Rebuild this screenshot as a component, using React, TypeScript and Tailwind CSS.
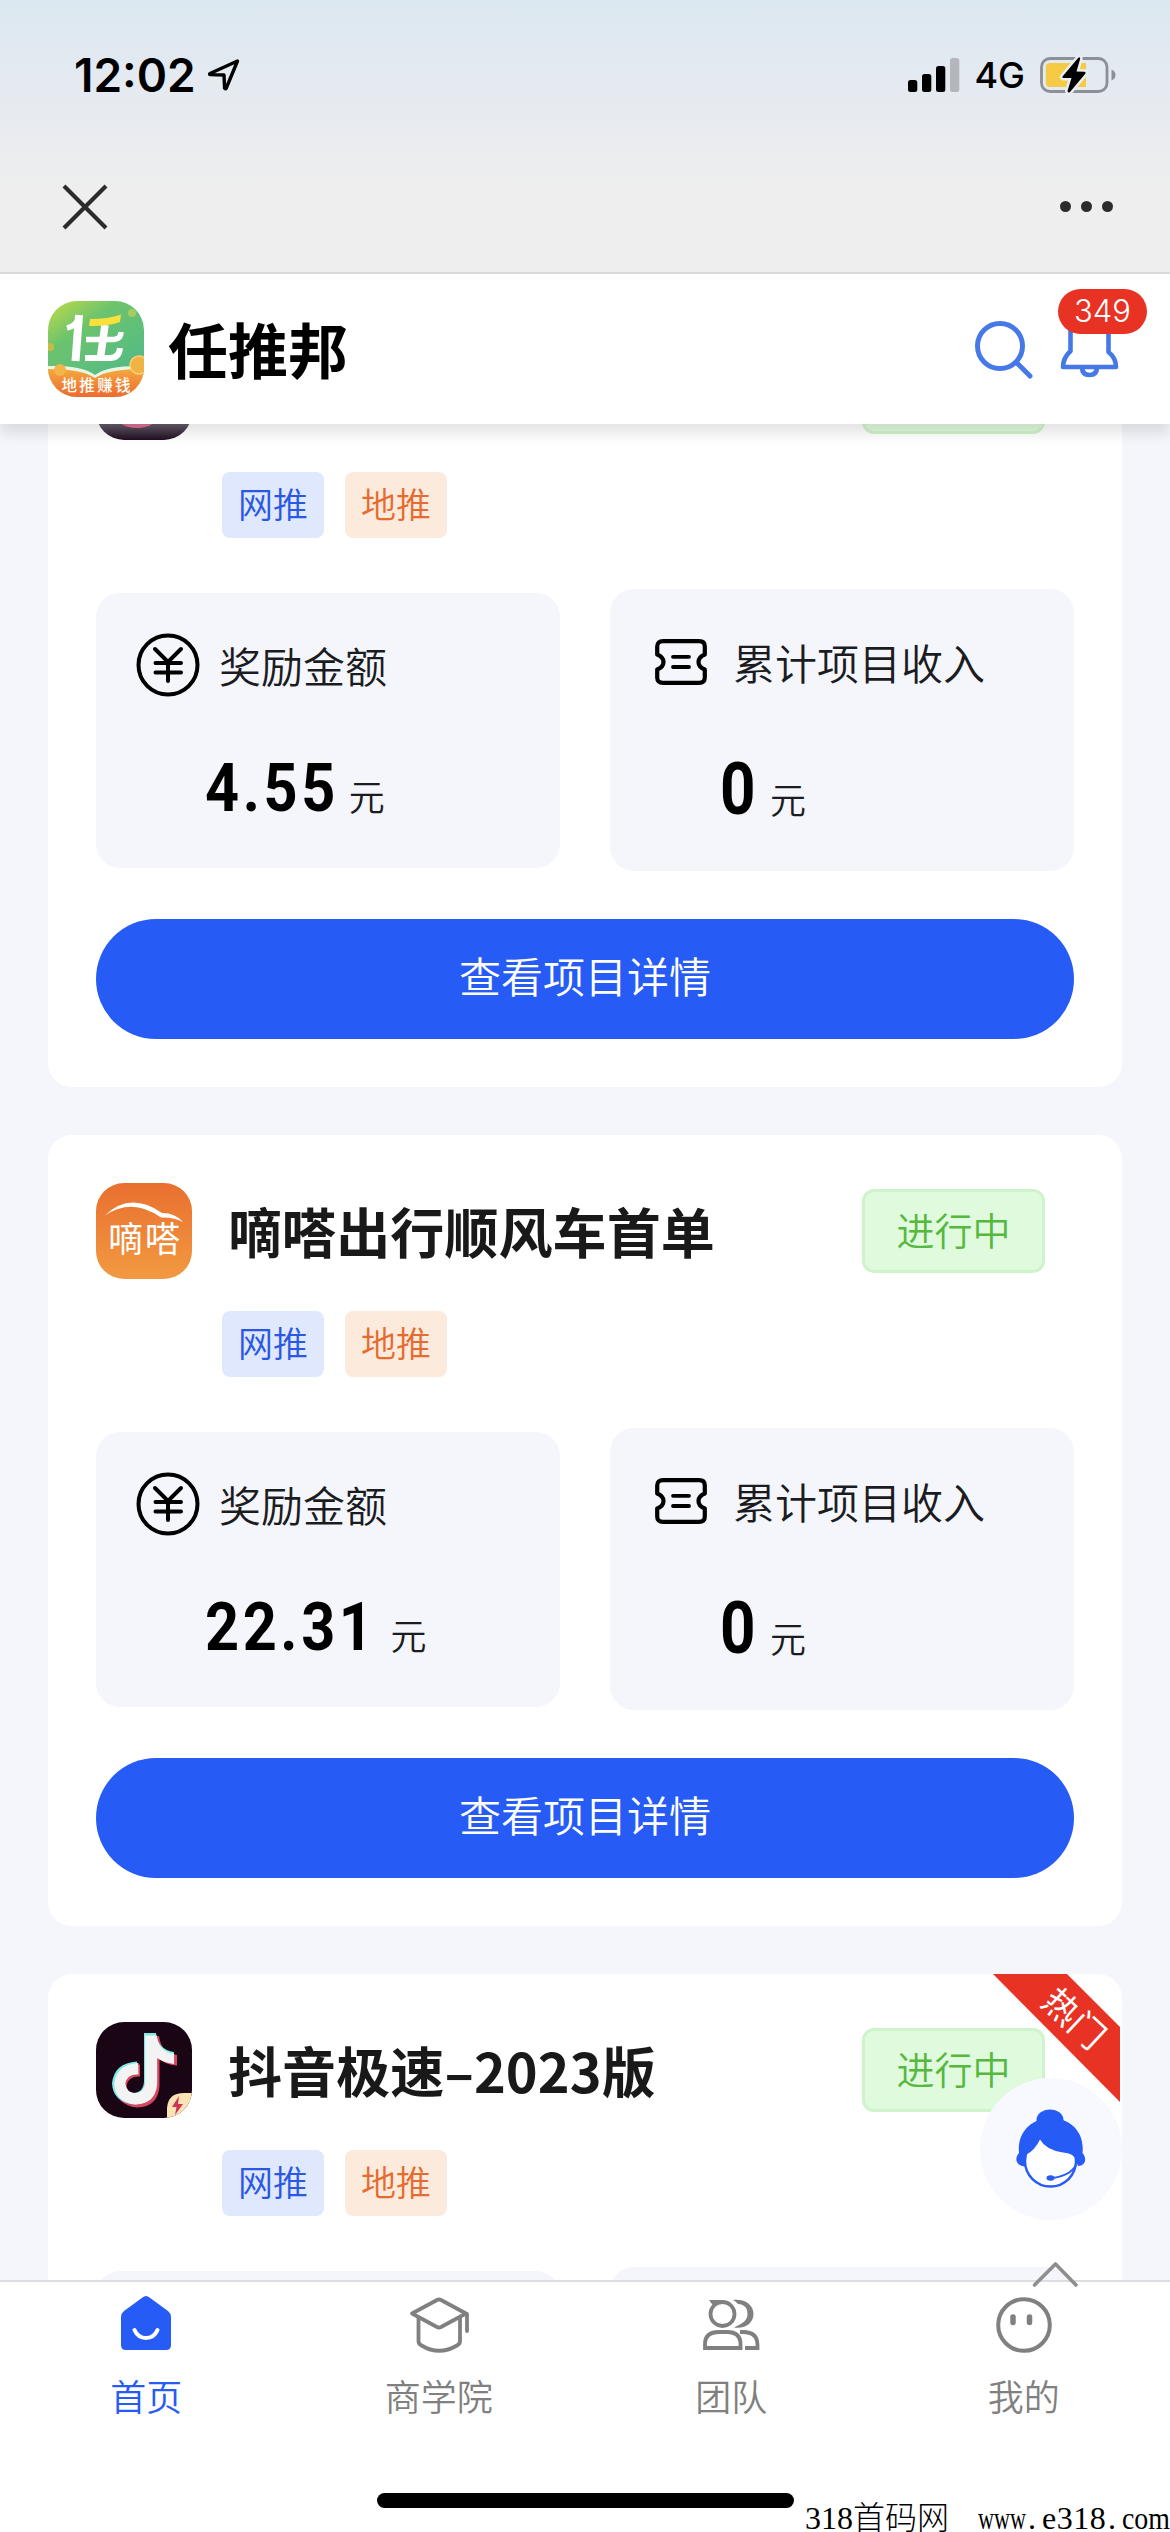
import React from 'react';

interface Project {
  id: number;
  name?: string;
  status?: string;
  icon: React.ReactNode;
  reward?: string;
  income?: string;
  hot?: boolean;
}

/* ---------- status bar icons ---------- */

function LocationArrow() {
  return (
    <svg width="34" height="34" viewBox="0 0 34 34" fill="none" stroke="#000" strokeWidth="3.4" strokeLinejoin="round">
      <path d="M30.5 3 L3 15.5 Q2 16.5 3.5 16.6 L17 17 L17.6 30.3 Q18.3 31.6 19.3 30 Z" />
    </svg>
  );
}

function Signal() {
  return (
    <svg width="52" height="36" viewBox="0 0 52 36">
      <rect x="0" y="23" width="9.3" height="12" rx="2.5" />
      <rect x="14" y="17" width="9.3" height="18" rx="2.5" />
      <rect x="28" y="9" width="9.3" height="26" rx="2.5" />
      <rect x="42" y="1" width="9.3" height="34" rx="2.5" fill="#b3b7bb" />
    </svg>
  );
}

function Battery() {
  return (
    <svg width="76" height="40" viewBox="0 0 76 40">
      <rect x="1.5" y="3.5" width="65.5" height="33" rx="8.5" fill="none" stroke="#8c9096" strokeWidth="2.8" />
      <path d="M10 8 H46 V32 H10 Q5.8 32 5.8 28 V12 Q5.8 8 10 8 Z" fill="#f5cb46" />
      <path d="M71.5 14.5 Q75.5 16 75.5 20 Q75.5 24 71.5 25.5 Z" fill="#8c9096" />
      <path
        d="M38.5 2.5 L22.5 21.5 Q22 23 23.5 23 L31.5 23 L27.5 36 Q28 38.5 30 37 L45.5 18.5 Q46 16.8 44.5 16.7 L36.5 16.5 L40.2 3.8 Q40 1.5 38.5 2.5 Z"
        fill="#000"
        stroke="#eceff2"
        strokeWidth="5"
        paintOrder="stroke"
      />
    </svg>
  );
}

/* ---------- logos ---------- */

function BrandLogo() {
  return (
    <svg width="96" height="96" viewBox="0 0 96 96">
      <defs>
        <linearGradient id="brandBg" x1="0" y1="0" x2="0.7" y2="1">
          <stop offset="0" stopColor="#c3dc48" />
          <stop offset="0.35" stopColor="#6cc36d" />
          <stop offset="1" stopColor="#4fb98a" />
        </linearGradient>
        <linearGradient id="brandBook" x1="0" y1="0" x2="0" y2="1">
          <stop offset="0" stopColor="#f4a83f" />
          <stop offset="1" stopColor="#ee6a2e" />
        </linearGradient>
        <clipPath id="brandClip">
          <rect width="96" height="96" rx="29" />
        </clipPath>
      </defs>
      <g clipPath="url(#brandClip)">
        <rect width="96" height="96" fill="url(#brandBg)" />
        <circle cx="84" cy="12" r="4" fill="#a5cf5c" />
        <path d="M0 65 Q34 64 47 74 Q60 64 96 65 V96 H0 Z" fill="#e9f6e4" />
        <path d="M0 68 Q34 68 47 77 Q60 68 96 68 V96 H0 Z" fill="url(#brandBook)" />
        <circle cx="12" cy="69" r="6" fill="#f3b549" />
        <circle cx="2" cy="46" r="4" fill="#c9bb45" />
        <circle cx="91" cy="64" r="9" fill="#f0b446" stroke="#f7cf75" strokeWidth="1.5" />
        <g fill="none" stroke="#fff">
          <path d="M19 27 Q28 25 31 17" strokeWidth="5.5" />
          <path d="M31 14 L27.5 60" strokeWidth="8" />
          <path d="M57 24 L52.5 56" strokeWidth="7.5" />
          <path d="M38 38.5 H66 Q73 38 73 31" strokeWidth="5.5" />
          <path d="M37 57 H62 Q71 57 72 47" strokeWidth="6" />
        </g>
        <path d="M42 18 Q60 18 73 13.5 L72 21 Q60 25.5 41 25 Z" fill="#f9e03a" />
        <text x="48" y="90" fontSize="15.5" fontWeight="500" fill="#fff" textAnchor="middle" textLength="69">
          地推赚钱
        </text>
      </g>
    </svg>
  );
}

function DidaLogo() {
  return (
    <svg width="96" height="96" viewBox="0 0 96 96">
      <defs>
        <linearGradient id="didaBg" x1="0" y1="0" x2="0" y2="1">
          <stop offset="0" stopColor="#e96f2f" />
          <stop offset="1" stopColor="#f29a41" />
        </linearGradient>
      </defs>
      <rect width="96" height="96" rx="28" fill="url(#didaBg)" />
      <path d="M9 32.5 Q34 8 66 30 Q80 30 87.5 39.5 Q78 34 65 34.5 Q36 14 9 32.5 Z" fill="#fff" />
      <text x="48" y="69" fontSize="35" fill="#fff" textAnchor="middle" textLength="72" fontWeight="400">
        嘀嗒
      </text>
    </svg>
  );
}

const NOTE = 'M48 11 H60 Q62 28 78 30 V40.5 Q68 40 60.5 34.5 V61 Q59 82 38 82.5 Q17 80 16 61.5 Q18 41 41 39.5 V51.5 Q29 51 27.5 61 Q29 70.5 38 71 Q47.5 70 48 60 Z';

function DouyinLogo() {
  return (
    <svg width="96" height="96" viewBox="0 0 96 96">
      <defs>
        <clipPath id="douyinClip">
          <rect width="96" height="96" rx="28" />
        </clipPath>
      </defs>
      <g clipPath="url(#douyinClip)">
        <rect width="96" height="96" fill="#1a0515" />
        <path d={NOTE} fill="#d8455f" transform="translate(3 3)" />
        <path d={NOTE} fill="#7ee9e6" />
        <path d={NOTE} fill="#f3f3f3" transform="translate(2.8 2.8) scale(0.965)" />
        <path d="M71 96 V86 Q72 71 88 71 H96 V96 Z" fill="#fbe3b4" />
        <path d="M83 74 L76 85 H80.5 L79 93 L87 82 H82 Z" fill="#cf3355" />
      </g>
    </svg>
  );
}

function FadedLogo() {
  return (
    <svg width="96" height="96" viewBox="0 0 96 96">
      <defs>
        <linearGradient id="fadeBg" x1="0" y1="0.82" x2="0" y2="1">
          <stop offset="0" stopColor="#6b6370" />
          <stop offset="1" stopColor="#210d20" />
        </linearGradient>
      </defs>
      <rect width="96" height="96" rx="28" fill="url(#fadeBg)" />
      <ellipse cx="41" cy="70" rx="22" ry="14" fill="#dd6f92" />
    </svg>
  );
}

/* ---------- card icons ---------- */

function YenIcon() {
  return (
    <svg width="64" height="64" viewBox="0 0 64 64" fill="none" stroke="#000" strokeWidth="4" strokeLinecap="round">
      <circle cx="32" cy="32" r="29.5" />
      <path d="M19 16 L32 29 L45 16 M32 29 V48 M19.5 30 H45 M19.5 39.5 H45" />
    </svg>
  );
}

function TicketIcon() {
  return (
    <svg width="52" height="46" viewBox="0 0 52 46" fill="none" stroke="#000" strokeWidth="4.2" strokeLinecap="round" strokeLinejoin="round">
      <path d="M8 2.2 H44 Q49.8 2.2 49.8 7.5 V15.5 Q43.5 18 43.5 23 Q43.5 28 49.8 30.5 V38.5 Q49.8 43.8 44 43.8 H8 Q2.2 43.8 2.2 38.5 V30.5 Q8.5 28 8.5 23 Q8.5 18 2.2 15.5 V7.5 Q2.2 2.2 8 2.2 Z" />
      <path d="M18 17.8 H34 M18 28 H34" strokeWidth="3.8" />
    </svg>
  );
}

function ServiceIcon() {
  return (
    <svg width="72" height="80" viewBox="0 0 72 80">
      <circle cx="35.5" cy="52" r="25.5" fill="#fff" stroke="#265bf6" strokeWidth="2.4" />
      <ellipse cx="35" cy="11" rx="13.5" ry="10.5" fill="#265bf6" />
      <path
        d="M4 44 C2 22 18 9 36 9 C54 9 70 22 67.5 44 C72 49 71 57 63 57 L60.5 50.5 Q59 44.5 48 43.5 Q31 41 25 30.5 Q20 41 11.5 45.5 L10.5 57.5 C1 57.5 -1 49 4 44 Z"
        fill="#265bf6"
      />
      <path d="M61 56 Q55 67 37 69" fill="none" stroke="#265bf6" strokeWidth="1.8" />
      <ellipse cx="35.5" cy="69" rx="4" ry="2.8" fill="#265bf6" />
    </svg>
  );
}

/* ---------- tab icons ---------- */

function HomeIcon() {
  return (
    <svg width="60" height="60" viewBox="0 0 60 60">
      <path
        d="M26.5 2.5 Q30 -0.5 33.5 2.5 L52 16 Q55 18.5 55 22 V50 Q55 55 50 55 H10 Q5 55 5 50 V22 Q5 18.5 8 16 Z"
        fill="#265bf6"
      />
      <path d="M18.5 35 Q22 43 30 43 Q38 43 41.5 35" fill="none" stroke="#fff" strokeWidth="4" strokeLinecap="round" />
    </svg>
  );
}

function SchoolIcon() {
  return (
    <svg width="60" height="60" viewBox="0 0 60 60" fill="none" stroke="#808080" strokeWidth="3.8" strokeLinejoin="round" strokeLinecap="round">
      <path d="M3 18.5 L28 5 Q30 4 32 5 L57 18.5 L32 32 Q30 33 28 32 Z" />
      <path d="M9.5 23 V46 Q9.5 49 12.5 50.5 Q30 61 48 50.5 Q51 49 51 46 V23" />
      <path d="M58 19 V36" />
    </svg>
  );
}

function TeamIcon() {
  return (
    <svg width="60" height="60" viewBox="0 0 60 60" fill="none" stroke="#808080" strokeWidth="3.8">
      <circle cx="21.5" cy="19" r="12" />
      <path d="M8 5 H22 L13 12 Q11 9 8 5 Z" fill="#808080" stroke="none" />
      <path
        d="M32 5 C44 3.5 52.5 10 52.5 19 C52.5 28 44 34.5 33 32.5 C41 28.5 46.5 26 46.5 19 C46.5 12.5 43 9.5 37 9 Q35 6.5 32 5 Z"
        fill="#808080"
        stroke="none"
      />
      <path d="M4 53 V49 Q4 37 18 37 H26 Q39.5 37 39.5 49 V53 Z" />
      <path d="M39 37 H42 Q56.5 37 56.5 50 V53 H44" />
    </svg>
  );
}

function MineIcon() {
  return (
    <svg width="60" height="60" viewBox="0 0 60 60" fill="none" stroke="#808080">
      <circle cx="30" cy="30" r="25.8" strokeWidth="4" />
      <path d="M19 22 V27.5 M35.5 22 V27.5" strokeWidth="5.5" strokeLinecap="round" />
    </svg>
  );
}

/* ---------- sections ---------- */

function SystemBar() {
  return (
    <div className="h-[274px] shrink-0 border-b-2 border-[#d9dadb] bg-linear-to-b from-[#dce8f1] via-[#e8ebf0] via-45% to-[#eeeeee] to-70%">
      <div className="flex h-[150px] items-center pl-[74px] pr-[54px]">
        <span className="font-[Inter] text-[46px] font-semibold leading-none text-black">12:02</span>
        <span className="ml-[11px]">
          <LocationArrow />
        </span>
        <div className="ml-auto flex items-center">
          <Signal />
          <span className="ml-[14px] mr-[15px] font-[Inter] text-[36px] font-medium leading-none">4G</span>
          <Battery />
        </div>
      </div>
      <div className="flex h-[113px] items-center justify-between pl-[62px] pr-[57px]">
        <svg width="46" height="46" viewBox="0 0 46 46" stroke="#2c2c2c" strokeWidth="4.2">
          <path d="M2 2 L44 44 M44 2 L2 44" />
        </svg>
        <div className="flex gap-[10px]">
          <i className="size-[11px] rounded-full bg-[#2c2c2c]" />
          <i className="size-[11px] rounded-full bg-[#2c2c2c]" />
          <i className="size-[11px] rounded-full bg-[#2c2c2c]" />
        </div>
      </div>
    </div>
  );
}

function AppHeader() {
  return (
    <header className="relative z-10 flex h-[150px] shrink-0 items-center bg-white pl-12 shadow-[0_10px_12px_rgba(0,0,0,0.1)]">
      <BrandLogo />
      <h1 className="mb-[3px] ml-[24px] text-[60px] font-bold leading-none text-black">任推邦</h1>
      <div className="ml-auto flex items-center pr-[46px]">
        <svg width="62" height="62" viewBox="0 0 62 62" fill="none" stroke="#4678e8" strokeWidth="5" strokeLinecap="round">
          <circle cx="28" cy="28" r="22.5" />
          <path d="M45 45 L58 58" />
        </svg>
        <div className="relative ml-[24px]">
          <svg width="66" height="68" viewBox="0 0 66 68" fill="none" stroke="#4678e8" strokeWidth="4.6" strokeLinejoin="round">
            <path d="M12.5 14 V36 Q5 43 5 52 H58 Q58 43 50.5 37 V14" />
            <path d="M24 52 Q24 60 31.5 60 Q39 60 39 52" />
          </svg>
          <span className="absolute left-0 top-[-26px] flex h-[45px] w-[89px] items-center justify-center rounded-full bg-[#e83223] font-[Inter] text-[31px] font-light text-white">
            349
          </span>
        </div>
      </div>
    </header>
  );
}

function ProjectCard({ project }: { project: Project }) {
  return (
    <section className="relative h-[791px] shrink-0 overflow-hidden rounded-3xl bg-white px-12 pt-12">
      <div className="flex h-24 items-center">
        {project.icon}
        <h2 className="ml-[36px] whitespace-nowrap text-[54px] font-bold leading-none tracking-[0.1px] text-[#191919]">
          {project.name}
        </h2>
        <span className="ml-auto mr-[29px] flex h-[84px] w-[183px] items-center justify-center rounded-[12px] border-[3px] border-[#cff4cb] bg-[#e0fadd] pb-[5px] text-[38px] text-[#56b83e]">
          {project.status}
        </span>
      </div>

      <div className="ml-[126px] mt-8 flex gap-[21px] text-[35px]">
        <span className="flex h-[66px] w-[102px] items-center justify-center rounded-lg bg-[#dfe8fc] pb-[4px] text-[#2a57e4]">网推</span>
        <span className="flex h-[66px] w-[102px] items-center justify-center rounded-lg bg-[#fceadd] pb-[4px] text-[#e66b2e]">地推</span>
      </div>

      <div className="mt-[51px] flex items-center justify-between">
        <div className="h-[275px] w-[464px] rounded-3xl bg-[#f5f6fb] pl-[40px] pt-[40px]">
          {project.reward && (
            <>
              <div className="flex h-[64px] items-center">
                <YenIcon />
                <span className="ml-[19px] text-[42px] leading-none text-[#1b1c1f]">奖励金额</span>
              </div>
              <div className="mt-[59px] flex items-baseline pl-[69px]">
                <b className="origin-left scale-x-90 font-[Roboto] text-[66px] font-bold leading-none tracking-[4px] text-black">
                  {project.reward}
                </b>
                <span className="-ml-[5px] text-[36px] leading-none text-[#1b1c1f]">元</span>
              </div>
            </>
          )}
        </div>
        <div className="h-[282px] w-[464px] rounded-3xl bg-[#f5f6fb] pl-[45px] pt-[45px]">
          {project.income && (
            <>
              <div className="flex items-center">
                <TicketIcon />
                <span className="ml-[26px] text-[42px] leading-[56px] text-[#1b1c1f]">累计项目收入</span>
              </div>
              <div className="mt-[64px] flex items-baseline pl-[65px]">
                <b className="w-[36px] origin-left scale-x-[0.86] font-[Roboto] text-[72px] font-bold leading-none text-black">
                  {project.income}
                </b>
                <span className="ml-[14px] text-[36px] leading-none text-[#1b1c1f]">元</span>
              </div>
            </>
          )}
        </div>
      </div>

      {project.reward && (
        <button className="mt-12 flex h-[120px] w-full items-center justify-center rounded-full bg-[#265bf6] pb-[10px] text-[42px] text-white">
          查看项目详情
        </button>
      )}

      {project.hot && (
        <div className="absolute right-[2px] top-0 h-[128px] w-[128px]">
          <svg width="128" height="128" viewBox="0 0 128 128">
            <path d="M1 0 H75 L128 53 V128 Z" fill="#e83223" />
          </svg>
          <span className="absolute left-[49px] top-[25px] rotate-[43deg] text-[35px] font-normal leading-none text-white">热门</span>
        </div>
      )}
    </section>
  );
}

const projects: Project[] = [
  { id: 1, icon: <FadedLogo />, reward: '4.55', income: '0' },
  { id: 2, name: '嘀嗒出行顺风车首单', status: '进行中', icon: <DidaLogo />, reward: '22.31', income: '0' },
  { id: 3, name: '抖音极速–2023版', status: '进行中', icon: <DouyinLogo />, hot: true },
];

const tabs = [
  { label: '首页', icon: <HomeIcon />, active: true },
  { label: '商学院', icon: <SchoolIcon />, active: false },
  { label: '团队', icon: <TeamIcon />, active: false },
  { label: '我的', icon: <MineIcon />, active: false },
];

function TabBar() {
  return (
    <nav className="relative h-[252px] shrink-0 border-t-2 border-[#dcdde0] bg-white">
      <div className="flex">
        {tabs.map(tab => (
          <div
            key={tab.label}
            className={`flex flex-1 flex-col items-center pt-[13px] ${tab.active ? 'text-[#265bf6]' : 'text-[#808080]'}`}
          >
            {tab.icon}
            <span className="mt-[20px] text-[36px] leading-[40px]">{tab.label}</span>
          </div>
        ))}
      </div>
      <div className="mx-auto mt-[78px] h-[15px] w-[417px] rounded-full bg-black" />

      {/* Site watermark */}
      <div className="absolute bottom-0 left-[805px] flex items-baseline whitespace-nowrap font-['Liberation_Serif','Noto_Sans_CJK_SC',serif] text-[32px] font-light leading-[27px] text-black">
        <span className="w-[144px]">318首码网</span>
        <span className="ml-[29px] w-[48px] origin-left scale-x-[0.69]">www</span>
        <span className="w-[16px] pl-[2px]">.</span>
        <span className="w-[64px] tracking-[0.5px]">e318</span>
        <span className="w-[16px] pl-[2px]">.</span>
        <span className="w-[48px] origin-left scale-x-[0.87]">com</span>
      </div>
    </nav>
  );
}

export default function App() {
  return (
    <div className="relative flex h-[2532px] w-[1170px] flex-col overflow-hidden bg-[#f4f6fb] font-['Noto_Sans_CJK_SC',sans-serif] font-[350]">
      <SystemBar />
      <AppHeader />
      <main className="min-h-0 flex-1 overflow-hidden px-12">
        <div className="-mt-32 flex flex-col gap-12">
          {projects.map(project => (
            <ProjectCard key={project.id} project={project} />
          ))}
        </div>
      </main>
      <TabBar />

      {/* Floating customer service button */}
      <button className="absolute left-[980px] top-[2078px] flex size-[142px] items-center justify-center rounded-full bg-[#f7f9fe]">
        <ServiceIcon />
      </button>
      {/* Back to top */}
      <svg className="absolute left-[1031px] top-[2260px]" width="48" height="30" viewBox="0 0 48 30" fill="none" stroke="#8e8e8e" strokeWidth="3.6" strokeLinecap="round" strokeLinejoin="round">
        <path d="M3.5 25 L24.5 4 L45 25" />
      </svg>
    </div>
  );
}
